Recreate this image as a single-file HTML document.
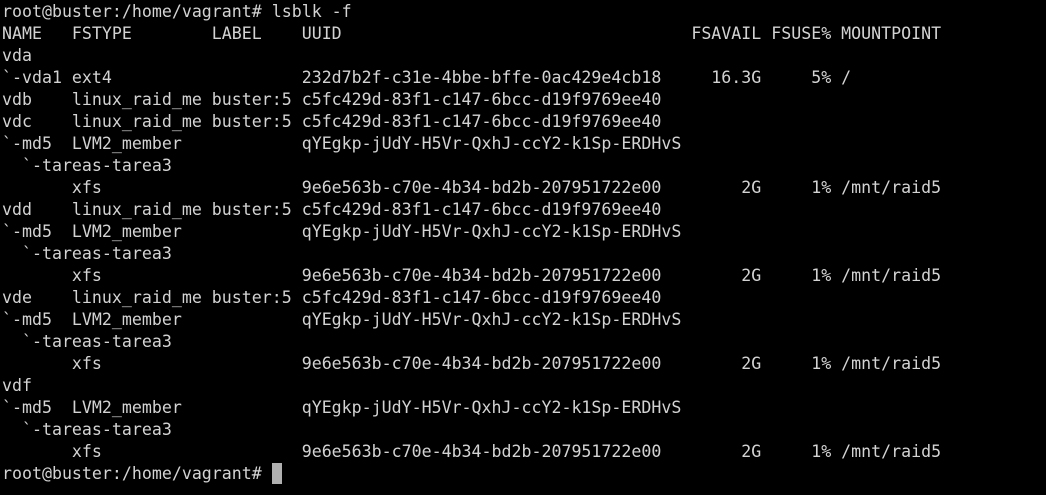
<!DOCTYPE html>
<html><head><style>
html,body{margin:0;padding:0;background:#000;width:1046px;height:495px;overflow:hidden}
pre{margin:0;padding:0 0 0 2px;font-family:"DejaVu Sans Mono","Liberation Mono",monospace;font-size:16.6px;line-height:22px;color:#d3d3d3;position:relative;top:1px}
.c{display:inline-block;width:10px;height:21px;background:#b0b0b0;vertical-align:-5px}
</style></head><body><pre>root@buster:/home/vagrant# lsblk -f
NAME   FSTYPE        LABEL    UUID                                   FSAVAIL FSUSE% MOUNTPOINT
vda
`-vda1 ext4                   232d7b2f-c31e-4bbe-bffe-0ac429e4cb18     16.3G     5% /
vdb    linux_raid_me buster:5 c5fc429d-83f1-c147-6bcc-d19f9769ee40
vdc    linux_raid_me buster:5 c5fc429d-83f1-c147-6bcc-d19f9769ee40
`-md5  LVM2_member            qYEgkp-jUdY-H5Vr-QxhJ-ccY2-k1Sp-ERDHvS
  `-tareas-tarea3
       xfs                    9e6e563b-c70e-4b34-bd2b-207951722e00        2G     1% /mnt/raid5
vdd    linux_raid_me buster:5 c5fc429d-83f1-c147-6bcc-d19f9769ee40
`-md5  LVM2_member            qYEgkp-jUdY-H5Vr-QxhJ-ccY2-k1Sp-ERDHvS
  `-tareas-tarea3
       xfs                    9e6e563b-c70e-4b34-bd2b-207951722e00        2G     1% /mnt/raid5
vde    linux_raid_me buster:5 c5fc429d-83f1-c147-6bcc-d19f9769ee40
`-md5  LVM2_member            qYEgkp-jUdY-H5Vr-QxhJ-ccY2-k1Sp-ERDHvS
  `-tareas-tarea3
       xfs                    9e6e563b-c70e-4b34-bd2b-207951722e00        2G     1% /mnt/raid5
vdf
`-md5  LVM2_member            qYEgkp-jUdY-H5Vr-QxhJ-ccY2-k1Sp-ERDHvS
  `-tareas-tarea3
       xfs                    9e6e563b-c70e-4b34-bd2b-207951722e00        2G     1% /mnt/raid5
root@buster:/home/vagrant# <span class="c"></span></pre></body></html>
